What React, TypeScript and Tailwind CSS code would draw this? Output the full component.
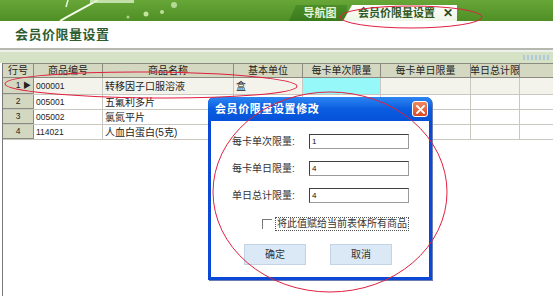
import React from "react";

const font = "font-['Liberation_Sans','Noto_Sans_CJK_SC',sans-serif]";

const cols = [
  { label: "行号", w: "w-[31px]" },
  { label: "商品编号", w: "w-[69px]" },
  { label: "商品名称", w: "w-[131px]" },
  { label: "基本单位", w: "w-[69px]" },
  { label: "每卡单次限量", w: "w-[78px]" },
  { label: "每卡单日限量", w: "w-[90px]" },
  { label: "单日总计限", w: "w-[49px]" },
];

const rows = [
  { no: "1", code: "000001", name: "转移因子口服溶液", unit: "盒", h: "h-[17px]", active: true },
  { no: "2", code: "005001", name: "五氟利多片", unit: "", h: "h-[15px]", active: false },
  { no: "3", code: "005002", name: "氯氮平片", unit: "", h: "h-[15px]", active: false },
  { no: "4", code: "114021", name: "人血白蛋白(5克)", unit: "", h: "h-[15px]", active: false },
];

function Banner() {
  return (
    <div className="relative h-[21px] bg-gradient-to-b from-[#67a637] to-[#4f8f25] flex items-end pl-[289px]">
      <svg className="absolute left-0 top-0" width="220" height="21" viewBox="0 0 220 21">
        <path d="M60 21 C72 14 84 8 98 0" stroke="#f4fbe8" strokeWidth="2" fill="none" />
        <path d="M68 0 L66 7" stroke="#e9f6d8" strokeWidth="1.5" />
        <rect x="90" y="0" width="44" height="3" fill="#d9efc4" opacity="0.8" />
        <circle cx="146" cy="14" r="2.5" fill="#dff7b8" opacity="0.8" />
        <circle cx="162" cy="12" r="2" fill="#e9fbc8" opacity="0.7" />
        <circle cx="174" cy="5" r="3" fill="#f0ffd8" opacity="0.6" />
        <circle cx="128" cy="17" r="1.5" fill="#e9fbc8" opacity="0.6" />
      </svg>
      <div className="relative h-[16px] w-[58px] bg-gradient-to-b from-[#4c8e28] to-[#3a7a1c] [clip-path:polygon(7px_0,100%_0,100%_100%,0_100%)] flex items-center justify-center pl-[4px]">
        <span className="text-[11px] font-bold text-[#e6f4d6] leading-none">导航图</span>
      </div>
      <div className="relative -ml-[4px] h-[16px] w-[114px] bg-gradient-to-b from-[#ffffff] to-[#eef6e6] [clip-path:polygon(9px_0,100%_0,100%_100%,0_100%)] flex items-center gap-[8px] pl-[15px]">
        <span className="text-[11px] font-bold text-[#2f5a24] leading-none">会员价限量设置</span>
        <span className="text-[12px] font-bold text-[#2a4a22] leading-none">✕</span>
      </div>
    </div>
  );
}

function Grid() {
  return (
    <div className="ml-[2px] flex-1 border-l border-[#7a7a7a] bg-white">
      <div className="flex h-[15px] bg-[#d4d8c0] border-y border-[#8a8a80]">
        {cols.map((c) => (
          <div
            key={c.label}
            className={`${c.w} shrink-0 border-r border-[#8a8a80] flex items-center justify-center text-[10px] leading-none text-[#222] overflow-hidden whitespace-nowrap`}
          >
            {c.label}
          </div>
        ))}
      </div>
      {rows.map((r) => (
        <div key={r.no} className={`flex ${r.h} border-b border-[#c8c8c0] text-[#222] ${r.active ? "bg-[#f3f3ec]" : "bg-white"}`}>
          <div className="w-[31px] shrink-0 bg-[#d4d8c0] border-r border-b border-[#8a8a80] flex items-center justify-center relative text-[8.5px]">
            {r.no}
            {r.active && <span className="absolute right-[2px] text-[8px] leading-none">▶</span>}
          </div>
          <div className="w-[69px] shrink-0 border-r border-[#c8c8c0] flex items-center pl-[2px] text-[8.5px]">{r.code}</div>
          <div className="w-[131px] shrink-0 border-r border-[#c8c8c0] flex items-center pl-[2px] text-[10px] whitespace-nowrap">{r.name}</div>
          <div className="w-[69px] shrink-0 border-r border-[#c8c8c0] flex items-center pl-[2px] text-[10px]">{r.unit}</div>
          <div className={`w-[78px] shrink-0 border-r border-[#c8c8c0] ${r.active ? "bg-[#96f8f8]" : ""}`} />
          <div className="w-[90px] shrink-0 border-r border-[#c8c8c0]" />
          <div className="w-[49px] shrink-0 border-r border-[#c8c8c0]" />
        </div>
      ))}
    </div>
  );
}

function Field({ label, value }: { label: string; value: string }) {
  return (
    <div className="flex items-center h-[15px]">
      <span className="w-[77px] text-[10px] text-[#333] leading-none">{label}:</span>
      <div className="w-[100px] h-[15px] border border-[#404040] border-r-[#9a9a9a] border-b-[#9a9a9a] bg-white text-[8px] leading-[13px] pl-[2px] text-[#111]">
        {value}
      </div>
    </div>
  );
}

function Dialog() {
  return (
    <div className="absolute left-[208px] top-[97px] w-[224px] h-[183px] flex flex-col rounded-t-[6px] bg-[#0b48d6] shadow-[1px_1px_0_#6a7fb0]">
      <div className="h-[24px] shrink-0 rounded-t-[6px] bg-gradient-to-b from-[#2d86f2] via-[#0a5ce0] to-[#0652d8] flex items-center justify-between pl-[7px] pr-[4px]">
        <span className="text-[11px] font-bold text-white tracking-[0.6px] leading-none">会员价限量设置修改</span>
        <div className="w-[16px] h-[16px] rounded-[3px] border border-white bg-gradient-to-b from-[#f08a60] to-[#d9461e] flex items-center justify-center">
          <svg width="9" height="9" viewBox="0 0 9 9">
            <path d="M1 1 L8 8 M8 1 L1 8" stroke="white" strokeWidth="1.8" strokeLinecap="round" />
          </svg>
        </div>
      </div>
      <div className="flex-1 mx-[3px] mb-[3px] bg-white flex flex-col pl-[21px] pt-[13px]">
        <div className="flex flex-col gap-[12px]">
          <Field label="每卡单次限量" value="1" />
          <Field label="每卡单日限量" value="4" />
          <Field label="单日总计限量" value="4" />
        </div>
        <div className="flex items-center mt-[14px] ml-[30px] gap-[3px]">
          <div className="w-[10px] h-[10px] border-l border-t border-[#777]" />
          <span className="text-[10px] text-[#333] leading-none border border-dotted border-[#555] px-[1px] py-[1px] whitespace-nowrap">
            将此值赋给当前表体所有商品
          </span>
        </div>
        <div className="flex mt-[13px] ml-[12px] gap-[24px]">
          <div className="w-[62px] h-[21px] bg-[#dbe8f5] border border-[#c2d3e6] flex items-center justify-center text-[10px] text-[#333]">确定</div>
          <div className="w-[62px] h-[21px] bg-[#dbe8f5] border border-[#c2d3e6] flex items-center justify-center text-[10px] text-[#333]">取消</div>
        </div>
      </div>
    </div>
  );
}

export default function App() {
  return (
    <div className={`relative w-[553px] h-[296px] overflow-hidden bg-white flex flex-col ${font}`}>
      <Banner />
      <div className="h-[27px] shrink-0 flex items-center pl-[15px]">
        <span className="text-[13px] font-bold text-[#2e5e30] tracking-[0.5px] leading-none">会员价限量设置</span>
      </div>
      <div className="h-[2px] shrink-0 bg-[#b4b8b0]" />
      <div className="h-[2px] shrink-0 bg-[#eef0ea]" />
      <div className="h-[11px] shrink-0 bg-[#d6e2c6] flex justify-end items-center pr-[2px]">
        <div className="w-[28px] h-[5px] bg-[repeating-linear-gradient(90deg,#9fc0e8_0_2px,transparent_2px_4px)] opacity-70" />
      </div>
      <Grid />
      <Dialog />
      <svg className="absolute inset-0 pointer-events-none" width="553" height="296" viewBox="0 0 553 296">
        <ellipse cx="411" cy="17" rx="71" ry="11" fill="none" stroke="#e02040" strokeWidth="1" />
        <ellipse cx="151" cy="85" rx="146" ry="13" fill="none" stroke="#e02040" strokeWidth="1" transform="rotate(0.5 151 85)" />
        <ellipse cx="330" cy="192" rx="117" ry="100" fill="none" stroke="#e02040" strokeWidth="1" />
      </svg>
    </div>
  );
}
